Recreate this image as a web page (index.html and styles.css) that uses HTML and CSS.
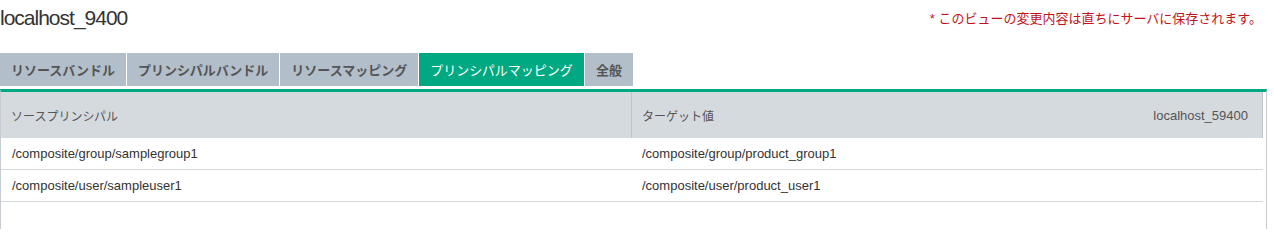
FILE: index.html
```html
<!DOCTYPE html>
<html lang="ja">
<head>
<meta charset="utf-8">
<title>localhost_9400</title>
<link rel="stylesheet" href="styles.css">
</head>
<body>
<header class="top">
  <h1 class="title">localhost_9400</h1>
  <p class="note">* このビューの変更内容は直ちにサーバに保存されます。</p>
</header>
<nav class="tabs">
  <span class="tab">リソースバンドル</span>
  <span class="tab">プリンシパルバンドル</span>
  <span class="tab">リソースマッピング</span>
  <span class="tab active">プリンシパルマッピング</span>
  <span class="tab">全般</span>
</nav>
<section class="panel">
  <div class="grid">
    <div class="row head">
      <div class="cell">ソースプリンシパル</div>
      <div class="cell split"><span>ターゲット値</span><span>localhost_59400</span></div>
    </div>
    <div class="row">
      <div class="cell">/composite/group/samplegroup1</div>
      <div class="cell">/composite/group/product_group1</div>
    </div>
    <div class="row">
      <div class="cell">/composite/user/sampleuser1</div>
      <div class="cell">/composite/user/product_user1</div>
    </div>
  </div>
</section>
</body>
</html>
```
FILE: styles.css
```css
html, body {
  margin: 0;
  padding: 0;
  background: #fff;
}
body {
  font-family: "Liberation Sans", Arial, "Noto Sans CJK JP", sans-serif;
  color: #333;
  width: 1274px;
  height: 233px;
  overflow: hidden;
}
.top {
  height: 53px;
  display: flex;
  align-items: flex-start;
  justify-content: space-between;
}
.title {
  margin: 0;
  padding-top: 5px;
  font-weight: normal;
  font-size: 21px;
  line-height: 25px;
  color: #333;
  letter-spacing: -1px;
}
.note {
  margin: 0;
  padding-top: 11px;
  padding-right: 12px;
  font-size: 13px;
  line-height: 16px;
  color: #c0141c;
}
.tabs {
  display: flex;
  gap: 1px;
  height: 33px;
}
.tab {
  display: flex;
  align-items: center;
  padding: 0 11px;
  background: #b2bec9;
  color: #555;
  font-family: "Noto Sans CJK JP", sans-serif;
  font-weight: bold;
  font-size: 13px;
}
.tab.active {
  background: #01a982;
  color: #fff;
  font-weight: normal;
}
.panel {
  margin-top: 3px;
  width: 1267px;
  height: 140px;
  box-sizing: border-box;
  border-top: 3px solid #01a982;
  border-left: 1px solid #c6ccd2;
  border-right: 1px solid #c6ccd2;
}
.grid {
  width: 1262px;
}
.row {
  display: grid;
  grid-template-columns: 631px 1fr;
  height: 31px;
  border-bottom: 1px solid #d5dade;
  font-size: 13px;
  color: #333;
}
.row.head {
  height: 46px;
  border-bottom: 0;
  background: #d5dadf;
  border-right: 1px solid #bcc5cd;
  color: #555;
}
.cell {
  display: flex;
  align-items: center;
  padding: 0 10px;
}
.row .cell:first-child {
  padding-left: 11px;
}
.row.head .cell:first-child {
  border-right: 1px solid #bcc5cd;
  padding-left: 10px;
  font-family: "Noto Sans CJK JP", sans-serif;
  font-size: 12px;
}
.split {
  justify-content: space-between;
  padding-right: 14px;
}
.split span:first-child {
  font-family: "Noto Sans CJK JP", sans-serif;
  font-size: 12px;
}
```
